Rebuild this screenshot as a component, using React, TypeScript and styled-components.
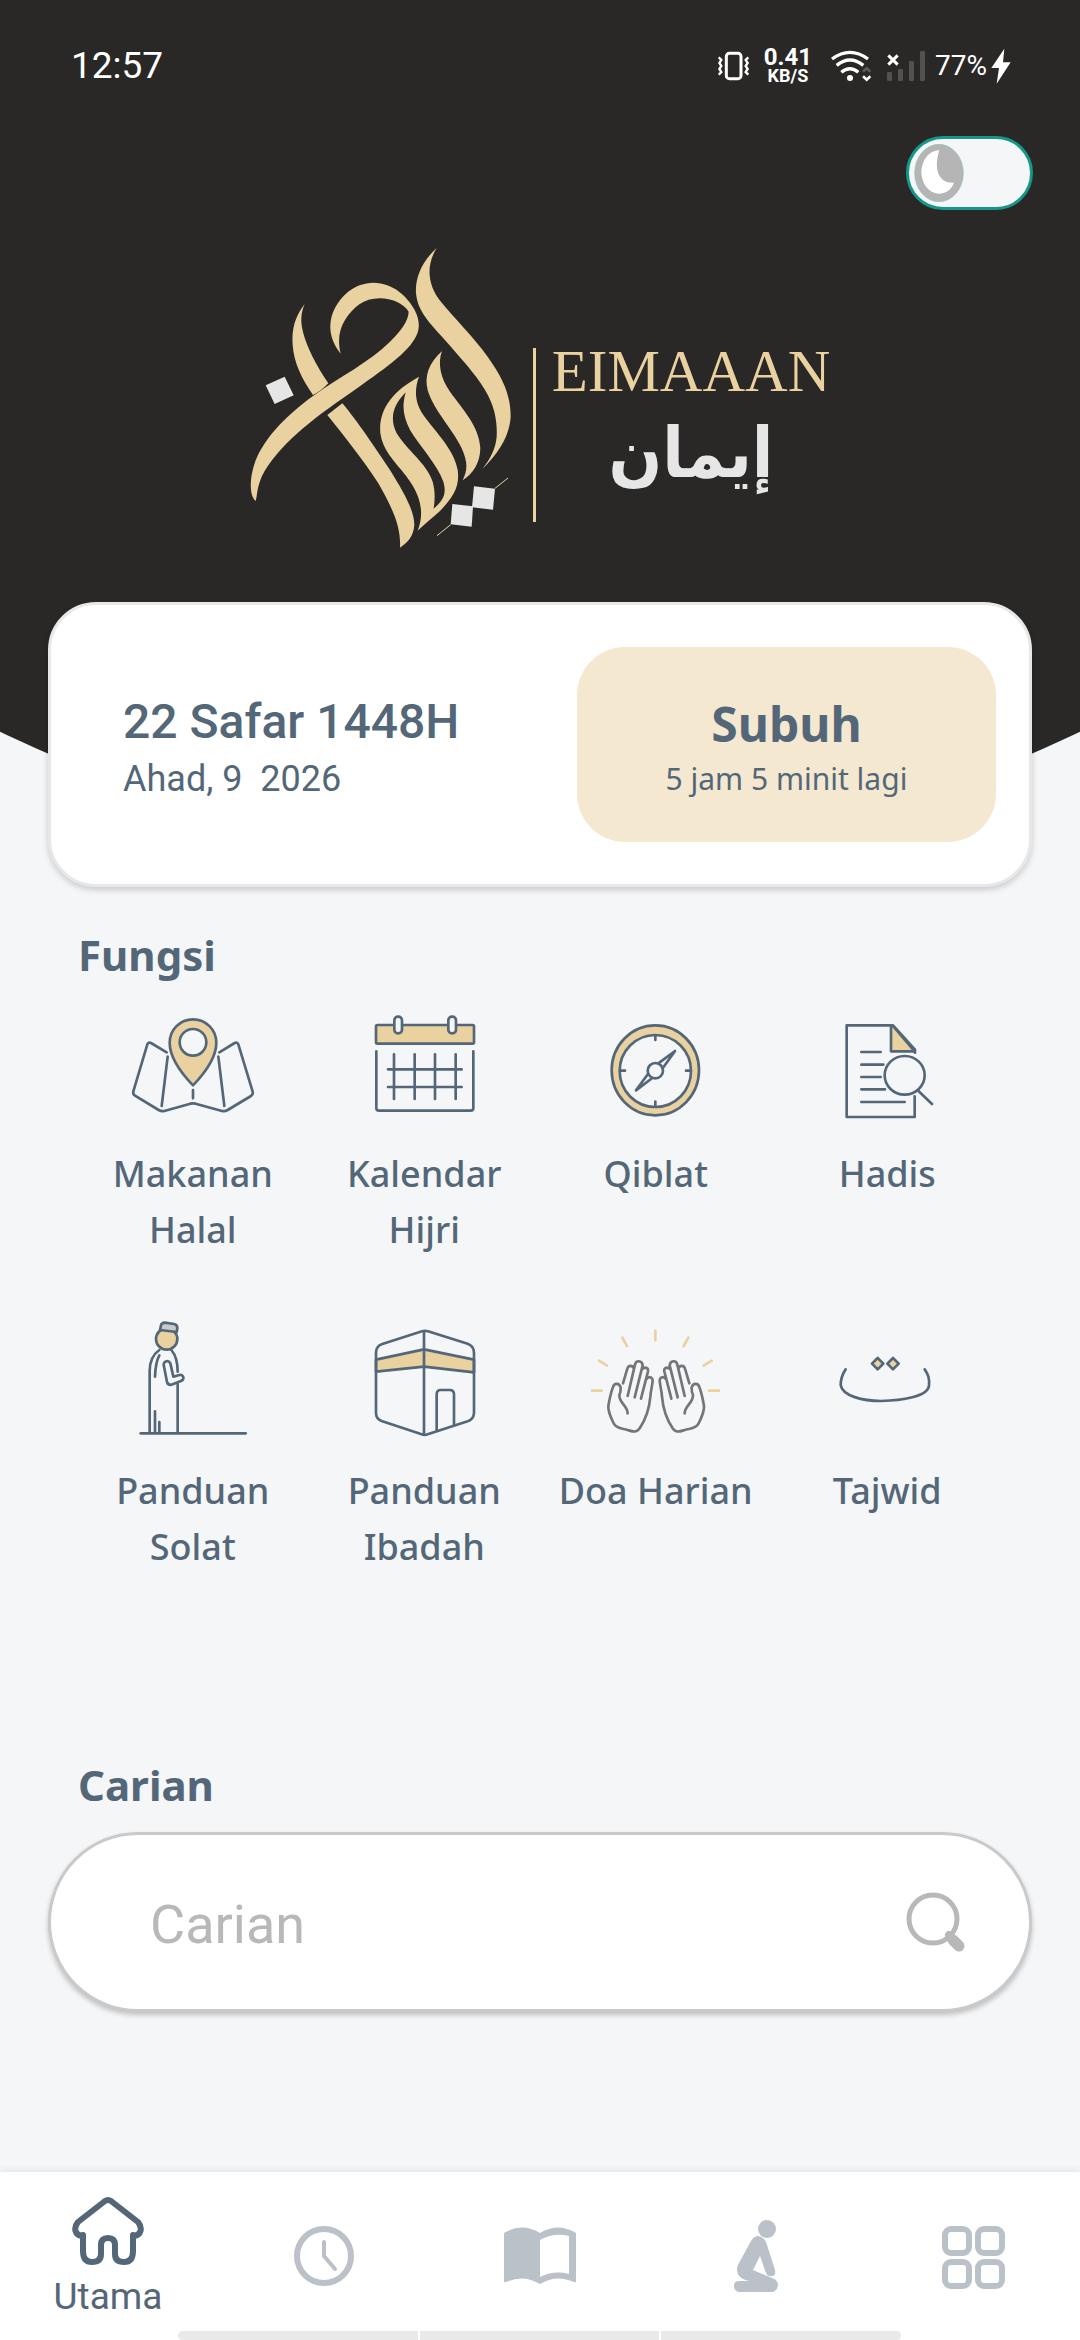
import React, { useState } from "react";
import styled, { createGlobalStyle } from "styled-components";

const color = {
  night: "#292826",
  page: "#f5f6f8",
  slate: "#546778",
  gold: "#e9d1a0",
  sand: "#f5e8d1",
  silver: "#e6e6e6",
  muted: "#bac1c9",
  hint: "#b8b8b8",
};

const humanist = `"Noto Sans", "Open Sans", sans-serif`;
const grotesk = `Roboto, "Liberation Sans", sans-serif`;

const GlobalStyle = createGlobalStyle`
  * { box-sizing: border-box; }
  body { margin: 0; background: ${color.page}; color: ${color.slate}; font-family: ${humanist}; }
  a { color: inherit; text-decoration: none; }
  svg { display: block; flex: none; }
`;

const Page = styled.div`
  display: flex;
  flex-direction: column;
  min-height: 100vh;
`;

/* ---------- header ---------- */

const Hero = styled.header`
  padding-bottom: 304px;
  background: ${color.night};
  clip-path: ellipse(115% 1239px at 50% calc(100% - 1239px));
`;

const StatusBar = styled.div`
  display: flex;
  align-items: center;
  justify-content: space-between;
  height: 108px;
  padding: 24px 69px 0 71px;
  color: #fff;
  font-family: ${grotesk};
`;

const Clock = styled.time`
  font-size: 37px;
  line-height: 44px;
`;

const StatusIcons = styled.div`
  display: flex;
  align-items: center;
  gap: 8px;
`;

const Speed = styled.div`
  display: flex;
  flex-direction: column;
  align-items: center;
  font-weight: 700;
`;

const SpeedValue = styled.span`
  font-size: 24px;
  line-height: 20px;
`;

const SpeedUnit = styled.span`
  font-size: 18px;
  line-height: 18px;
`;

const Battery = styled.span`
  display: flex;
  align-items: center;
  gap: 4px;
  font-size: 28px;
  line-height: 36px;
`;

const SwitchRow = styled.div`
  display: flex;
  justify-content: flex-end;
  padding: 28px 47px 0;
`;

const Switch = styled.label`
  display: flex;
  align-items: center;
  width: 127px;
  height: 74px;
  padding: 0 5px;
  border: 3px solid #17968a;
  border-radius: 37px;
  background: ${color.page};
  cursor: pointer;
`;

const SwitchInput = styled.input`
  position: absolute;
  opacity: 0;
`;

const Knob = styled.svg<{ $on: boolean }>`
  margin-left: ${(p) => (p.$on ? "auto" : "0")};
`;

const Logo = styled.div`
  display: flex;
  align-items: flex-start;
  justify-content: center;
  margin-top: 35px;
`;

const LogoRule = styled.div`
  width: 3px;
  height: 174px;
  margin: 103px 16px 0 19px;
  background: ${color.gold};
`;

const LogoWords = styled.div`
  display: flex;
  flex-direction: column;
  align-items: center;
  padding-top: 94px;
`;

const LogoLatin = styled.span`
  color: ${color.gold};
  font-family: "Liberation Serif", serif;
  font-size: 59px;
  line-height: 64px;
`;

const LogoArabic = styled.span`
  color: ${color.silver};
  font-family: "DejaVu Sans Condensed", "DejaVu Sans", sans-serif;
  font-size: 70px;
  font-weight: 700;
  line-height: 100px;
`;

/* ---------- body ---------- */

const Main = styled.main`
  display: flex;
  flex-direction: column;
  margin-top: -253px;
  padding: 0 48px;
  position: relative;
`;

const TodayCard = styled.section`
  display: flex;
  align-items: center;
  padding: 42px 33px 42px 72px;
  border: 3px solid #e8e8e8;
  border-radius: 48px;
  background: #fff;
  box-shadow: 0 3px 6px rgba(0, 0, 0, 0.18);
`;

const DateBlock = styled.div`
  flex: 1;
  padding-top: 8px;
  font-family: ${grotesk};
`;

const HijriDate = styled.div`
  font-size: 48px;
  font-weight: 500;
  line-height: 60px;
`;

const CivilDate = styled.div`
  font-size: 36px;
  line-height: 54px;
  white-space: pre;
`;

const PrayerCard = styled.div`
  display: flex;
  flex-direction: column;
  align-items: center;
  justify-content: center;
  width: 48%;
  height: 195px;
  padding-top: 10px;
  border-radius: 48px;
  background: ${color.sand};
`;

const PrayerName = styled.div`
  font-size: 48px;
  font-weight: 700;
  line-height: 58px;
`;

const PrayerLeft = styled.div`
  font-size: 30px;
  line-height: 52px;
`;

const Heading = styled.h2<{ $top: number; $bottom: number }>`
  margin: ${(p) => p.$top}px 30px ${(p) => p.$bottom}px;
  font-size: 42px;
  font-weight: 700;
  line-height: 56px;
`;

const Grid = styled.nav`
  display: grid;
  grid-template-columns: repeat(4, 1fr);
  row-gap: 54px;
  padding: 0 29px;
`;

const Tile = styled.a`
  display: flex;
  flex-direction: column;
  align-items: center;
  gap: 11px;
  min-height: 263px;
`;

const TileLabel = styled.span`
  padding: 0 16px;
  font-size: 36px;
  font-weight: 500;
  line-height: 56px;
  text-align: center;
`;

const SearchBox = styled.form`
  display: flex;
  align-items: center;
  height: 180px;
  padding: 0 60px 0 99px;
  border: 3px solid #cacaca;
  border-radius: 90px;
  background: #fff;
  box-shadow: 0 3px 5px rgba(0, 0, 0, 0.22);
`;

const SearchInput = styled.input`
  flex: 1;
  min-width: 0;
  padding: 6px 0 0;
  border: 0;
  outline: 0;
  background: none;
  color: ${color.slate};
  font-family: ${grotesk};
  font-size: 54px;
  line-height: 64px;

  &::placeholder {
    color: ${color.hint};
    opacity: 1;
  }
`;

const SearchButton = styled.button`
  padding: 0;
  border: 0;
  background: none;
  color: ${color.hint};
`;

/* ---------- bottom bar ---------- */

const TabBar = styled.nav`
  position: relative;
  display: grid;
  grid-template-columns: repeat(5, 1fr);
  height: 168px;
  margin-top: auto;
  background: #fff;
  box-shadow: 0 -1px 9px rgba(0, 0, 0, 0.09);
`;

const Tab = styled.button<{ $active?: boolean }>`
  display: flex;
  flex-direction: column;
  align-items: center;
  justify-content: center;
  gap: 9px;
  padding: 0;
  border: 0;
  background: none;
  color: ${(p) => (p.$active ? color.slate : color.muted)};
  font-family: ${grotesk};
  font-size: 37px;
  line-height: 42px;
`;

const GestureBar = styled.div`
  position: absolute;
  right: 179px;
  bottom: 0;
  left: 178px;
  display: flex;
  gap: 2px;
  height: 9px;
  border-radius: 5px;
  overflow: hidden;
`;

const GestureSegment = styled.span`
  flex: 1;
  background: #e9e9e9;
`;

/* ---------- drawings ---------- */

const Emblem = () => (
  <svg width="264" height="306" viewBox="30 45 792 918" fill={color.gold} aria-hidden="true">
    <path d="M590 54C545 95 525 145 528 190C533 245 570 280 612 327C665 388 705 430 735 480C765 530 772 575 770 620C767 655 752 685 727 717C775 670 808 620 812 560C812 490 785 440 745 383C700 320 640 262 604 217C565 170 555 110 590 54Z" />
    <path d="M194 222C163 262 155 300 158 345C162 400 185 445 219 495Q245 482 265 460C230 410 200 350 190 310C181 275 182 250 194 222Z" />
    <path d="M302 371C270 330 264 290 278 250C300 195 345 159 400 158C460 158 502 200 524 240C541 272 538 298 530 315C505 370 430 418 330 490C220 565 110 650 65 740C50 775 52 795 47 813C30 800 30 760 36 730C50 650 120 570 220 497C300 440 390 395 450 335C480 305 505 275 506 245C490 220 455 205 420 205C370 205 340 232 315 270C296 300 293 335 302 371Z" />
    <path d="M262 555L307 520C350 570 410 660 450 720C490 785 523 840 523 885C520 920 505 935 480 953C483 890 460 840 415 760C370 690 310 615 262 555Z" />
    <path
      fillRule="evenodd"
      d="M537 440C522 480 525 520 550 555C590 610 643 660 653 720C660 770 640 800 600 843C575 865 555 882 533 902C553 850 545 800 500 740C460 690 428 660 421 610C415 540 455 485 537 440ZM497 487C455 530 450 570 470 610C500 660 560 700 578 755C586 785 585 810 581 836C612 810 620 790 610 755C590 700 540 650 510 600C490 560 485 530 497 487Z"
    />
    <path d="M606 363C565 400 553 440 563 480C580 540 640 600 665 655C685 700 682 722 668 751C700 730 720 700 721 655C718 590 670 540 630 485C602 445 592 400 606 363Z" />
    <g fill={color.silver}>
      <path d="M77 466L134 440L161 496L104 522Z" />
      <path d="M702 769L765 776L759 839L696 832Z" />
      <path d="M637 822L699 829L695 890L632 883Z" />
    </g>
    <path d="M804 744L765 775M632 884L591 917" stroke={color.gold} strokeWidth="3" />
  </svg>
);

const VibrateIcon = () => (
  <svg width="38" height="36" viewBox="54 54 114 108" fill="none" stroke="#fff" aria-hidden="true">
    <rect x="79" y="70" width="44" height="76" rx="9" strokeWidth="9" />
    <path d="M56 82L64 90L58 99L64 108L58 117L64 126L56 134M145 82L137 90L143 99L137 108L143 117L137 126L145 134" strokeWidth="7" />
  </svg>
);

const WifiIcon = () => (
  <svg width="59" height="36" viewBox="357 54 177 108" fill="none" stroke="#fff" aria-hidden="true">
    <path d="M393 87Q447 47 501 87M407 106Q447 74 487 106M421 127Q447 105 472 127" strokeWidth="10" />
    <circle cx="447" cy="144" r="9" fill="#fff" stroke="none" />
    <path d="M486 139L497 149L508 139" strokeWidth="8" />
    <path d="M486 125L497 115L508 125" strokeWidth="8" stroke="#5c5b59" />
  </svg>
);

const SignalIcon = () => (
  <svg width="40" height="36" viewBox="558 54 120 108" aria-hidden="true">
    <g fill="#535250">
      <rect x="558" y="126" width="15" height="27" rx="4" />
      <rect x="591" y="117" width="15" height="36" rx="4" />
      <rect x="624" y="93" width="15" height="60" rx="4" />
      <rect x="657" y="63" width="15" height="90" rx="4" />
    </g>
    <path d="M562 76L590 104M590 76L562 104" stroke="#fff" strokeWidth="9" />
  </svg>
);

const BoltIcon = () => (
  <svg width="20" height="36" viewBox="875 54 60 108" fill="#fff" aria-hidden="true">
    <path d="M915 56L876 114H899L892 161L934 97H911Z" />
  </svg>
);

const tileArt = { width: 140, height: 140, fill: "none", stroke: color.slate, strokeWidth: 8, strokeLinecap: "round", strokeLinejoin: "round", "aria-hidden": true } as const;

const MapArt = () => (
  <svg {...tileArt} viewBox="189 225 420 420">
    <path d="M320 397L273 369Q265 365 262 373L220 514Q218 523 225 527L296 570Q304 575 313 573L391 551Q399 549 407 551L486 573Q495 575 503 570L573 528Q580 523 578 515L535 373Q532 365 524 369L478 397" />
    <path d="M323 410L305 558M475 410L493 558M399 510V535" />
    <path d="M399 496C355 450 329 410 329 368A70 70 0 0 1 469 368C469 410 443 450 399 496Z" fill={color.gold} />
    <circle cx="399" cy="367" r="40" fill={color.page} />
  </svg>
);

const CalendarArt = () => (
  <svg {...tileArt} viewBox="883 225 420 420">
    <rect x="949" y="315" width="294" height="56" rx="4" fill={color.gold} />
    <rect x="1004" y="290" width="23" height="50" rx="11" fill={color.page} />
    <rect x="1166" y="290" width="23" height="50" rx="11" fill={color.page} />
    <path d="M950 394V564Q950 572 958 572H1233Q1241 572 1241 564V394" />
    <path d="M1003 403V537M1065 403V537M1126 403V537M1188 403V537M985 448H1206M985 501H1206" />
  </svg>
);

const CompassArt = () => (
  <svg {...tileArt} viewBox="137 45 420 420">
    <ellipse cx="345" cy="271" rx="131" ry="135" fill={color.gold} />
    <ellipse cx="345" cy="273" rx="107" ry="108" fill={color.page} />
    <path d="M345 168V180M345 365V377M241 272H254M437 272H449" />
    <path d="M354 250L404 213L368 263M336 294L287 331L323 282" />
    <circle cx="345" cy="272" r="23" />
  </svg>
);

const HadithArt = () => (
  <svg {...tileArt} viewBox="832 45 420 420">
    <path d="M1125 349V411H921V136H1060L1126 209V218" />
    <path d="M1054 138V214H1125L1060 138Z" fill={color.gold} />
    <path d="M965 216H1023M965 254H1031M965 291H1023M965 328H1036M965 366H1095" />
    <ellipse cx="1095" cy="286" rx="60" ry="58" fill={color.page} />
    <path d="M1134 331L1177 372" />
  </svg>
);

const PrayerGuideArt = () => (
  <svg {...tileArt} viewBox="189 66 420 420">
    <path d="M242 430H557" />
    <path d="M298 180C278 194 269 215 269 243V428M334 180C347 195 353 213 353 245M353 282V428M298 196C288 214 286 232 285 260M285 364V428M298 396V428" />
    <circle cx="320" cy="147" r="32" fill={color.gold} />
    <path d="M300 120L303 106Q305 98 315 98L342 102Q353 105 352 115L350 126Z" fill="#c9cacd" />
    <path d="M340 260L331 220C326 210 312 212 311 224L321 276Q324 286 334 284L361 274C375 269 372 252 358 255Z" />
  </svg>
);

const KaabaArt = () => (
  <svg {...tileArt} viewBox="883 66 420 420">
    <path d="M949 209L1093 178L1243 209V247L1093 230L949 245Z" fill={color.gold} />
    <path d="M1087 124Q1096 121 1105 124L1224 161Q1243 168 1243 188V370Q1241 388 1224 394L1104 433Q1095 437 1086 433L968 394Q950 388 949 370V188Q949 168 968 162Z" />
    <path d="M1093 124V433M1131 420V313Q1131 300 1143 300H1170Q1183 300 1183 313V404" />
  </svg>
);

const Hand = () => (
  <>
    <path d="M262 370C261 345 236 340 237 315C242 305 241 298 241 292C237 279 222 278 218 291C210 312 208 325 204 348C203 368 214 386 220 400C228 418 248 415 262 420C275 424 288 430 298 415C315 390 327 355 330 320C331 300 337 285 337 270C334 259 323 260 320 266" />
    <path d="M248 280L261 236C264 224 278 226 280 235M262 318L284 224C287 210 305 210 307 226L283 322M309 236C315 230 325 234 323 244L302 326" />
  </>
);

const DuaArt = () => (
  <svg {...tileArt} viewBox="137 66 420 420">
    <path stroke={color.gold} d="M345 122V151M246 143L260 168M444 143L430 168M176 212L200 227M514 212L490 227M155 302H184M506 302H536" />
    <g stroke="#757575">
      <Hand />
      <g transform="translate(695 0) scale(-1 1)">
        <Hand />
      </g>
    </g>
  </svg>
);

const TajwidArt = () => (
  <svg {...tileArt} viewBox="832 66 420 420">
    <path d="M918 238C905 258 903 268 903 285C908 318 970 333 1024 333C1085 332 1165 320 1168 287C1170 265 1166 255 1155 238" />
    <path d="M1014 204L1031 221L1014 238L997 221ZM1060 204L1077 221L1060 238L1043 221Z" fill={color.gold} />
  </svg>
);

const tabArt = { width: 72, height: 72, viewBox: "0 0 72 72", "aria-hidden": true } as const;

const HomeArt = () => (
  <svg {...tabArt} fill="none" stroke="currentColor" strokeWidth="6" strokeLinecap="round" strokeLinejoin="round">
    <path d="M10 41C3 40 1 33 6 27L33 6Q36 4 39 6L66 27C71 33 69 40 62 41" />
    <path d="M11 40V56Q11 67 20 67Q29 67 29 59V50Q29 43 36 43Q43 43 43 50V59Q43 67 52 67Q61 67 61 56V40" />
  </svg>
);

const ClockArt = () => (
  <svg {...tabArt} fill="none" stroke="currentColor" strokeLinecap="round" strokeLinejoin="round">
    <circle cx="36" cy="36" r="27" strokeWidth="6" />
    <path d="M36 22V36L47 49" strokeWidth="4" />
  </svg>
);

const BookArt = () => (
  <svg {...tabArt} fill="currentColor">
    <path fillRule="evenodd" d="M0 13Q18 2 36 13Q54 2 72 13V61Q72 63 70 62Q52 54 36 64Q20 54 2 62Q0 63 0 61ZM36 20Q50 12 65 16V54Q50 50 36 57Z" />
  </svg>
);

const KneelArt = () => (
  <svg {...tabArt} fill="currentColor">
    <circle cx="47" cy="9" r="9" />
    <path d="M31 21Q37 12 44 19Q46 21 47 25L55 50Q56 56 52 56Q48 57 46 53L40 36L33 50L52 58Q58 60 58 65Q57 72 51 72H19Q14 71 14 66Q14 61 19 61H30Q17 59 17 49Q17 46 19 43Z" />
  </svg>
);

const MenuArt = () => (
  <svg {...tabArt} fill="none" stroke="currentColor" strokeWidth="6">
    <rect x="9" y="9" width="24" height="24" rx="6" />
    <rect x="42" y="9" width="24" height="24" rx="6" />
    <rect x="9" y="42" width="24" height="24" rx="6" />
    <rect x="42" y="42" width="24" height="24" rx="6" />
  </svg>
);

const features = [
  { label: "Makanan Halal", Art: MapArt },
  { label: "Kalendar Hijri", Art: CalendarArt },
  { label: "Qiblat", Art: CompassArt },
  { label: "Hadis", Art: HadithArt },
  { label: "Panduan Solat", Art: PrayerGuideArt },
  { label: "Panduan Ibadah", Art: KaabaArt },
  { label: "Doa Harian", Art: DuaArt },
  { label: "Tajwid", Art: TajwidArt },
];

const tabs = [
  { name: "Waktu", Art: ClockArt },
  { name: "Quran", Art: BookArt },
  { name: "Solat", Art: KneelArt },
  { name: "Menu", Art: MenuArt },
];

export default function App() {
  const [dark, setDark] = useState(false);
  const [query, setQuery] = useState("");

  return (
    <Page>
      <GlobalStyle />
      <Hero>
        <StatusBar>
          <Clock>12:57</Clock>
          <StatusIcons>
            <VibrateIcon />
            <Speed>
              <SpeedValue>0.41</SpeedValue>
              <SpeedUnit>KB/S</SpeedUnit>
            </Speed>
            <WifiIcon />
            <SignalIcon />
            <Battery>
              77%
              <BoltIcon />
            </Battery>
          </StatusIcons>
        </StatusBar>
        <SwitchRow>
          <Switch>
            <SwitchInput type="checkbox" role="switch" aria-label="Mod gelap" checked={dark} onChange={(e) => setDark(e.target.checked)} />
            <Knob $on={dark} width="50" height="58" viewBox="636 342 150 174" aria-hidden="true">
              <ellipse cx="711" cy="429" rx="73" ry="86" fill="#b5b5b5" stroke="#8cc4bd" strokeWidth="2" />
              <path d="M712 360C692 425 715 462 756 458C748 480 730 491 710 491C680 489 658 460 658 425C660 390 680 362 712 360Z" fill="#fff" />
            </Knob>
          </Switch>
        </SwitchRow>
        <Logo>
          <Emblem />
          <LogoRule />
          <LogoWords>
            <LogoLatin>EIMAAAN</LogoLatin>
            <LogoArabic lang="ar" dir="rtl">إيمان</LogoArabic>
          </LogoWords>
        </Logo>
      </Hero>

      <Main>
        <TodayCard>
          <DateBlock>
            <HijriDate>22 Safar 1448H</HijriDate>
            <CivilDate>{"Ahad, 9  2026"}</CivilDate>
          </DateBlock>
          <PrayerCard>
            <PrayerName>Subuh</PrayerName>
            <PrayerLeft>5 jam 5 minit lagi</PrayerLeft>
          </PrayerCard>
        </TodayCard>

        <Heading $top={40} $bottom={12}>Fungsi</Heading>
        <Grid>
          {features.map(({ label, Art }) => (
            <Tile key={label} href="#">
              <Art />
              <TileLabel>{label}</TileLabel>
            </Tile>
          ))}
        </Grid>

        <Heading $top={182} $bottom={19}>Carian</Heading>
        <SearchBox onSubmit={(e) => e.preventDefault()}>
          <SearchInput type="text" aria-label="Carian" placeholder="Carian" value={query} onChange={(e) => setQuery(e.target.value)} />
          <SearchButton type="submit" aria-label="Cari">
            <svg width="66" height="66" viewBox="0 0 66 66" fill="none" stroke="currentColor" strokeLinecap="round">
              <circle cx="30" cy="30" r="24" strokeWidth="5" />
              <path d="M46 46L48 48" strokeWidth="8" />
              <path d="M50 51L56 57" strokeWidth="11" />
            </svg>
          </SearchButton>
        </SearchBox>
      </Main>

      <TabBar>
        <Tab $active>
          <HomeArt />
          Utama
        </Tab>
        {tabs.map(({ name, Art }) => (
          <Tab key={name} aria-label={name}>
            <Art />
          </Tab>
        ))}
        <GestureBar>
          <GestureSegment />
          <GestureSegment />
          <GestureSegment />
        </GestureBar>
      </TabBar>
    </Page>
  );
}
